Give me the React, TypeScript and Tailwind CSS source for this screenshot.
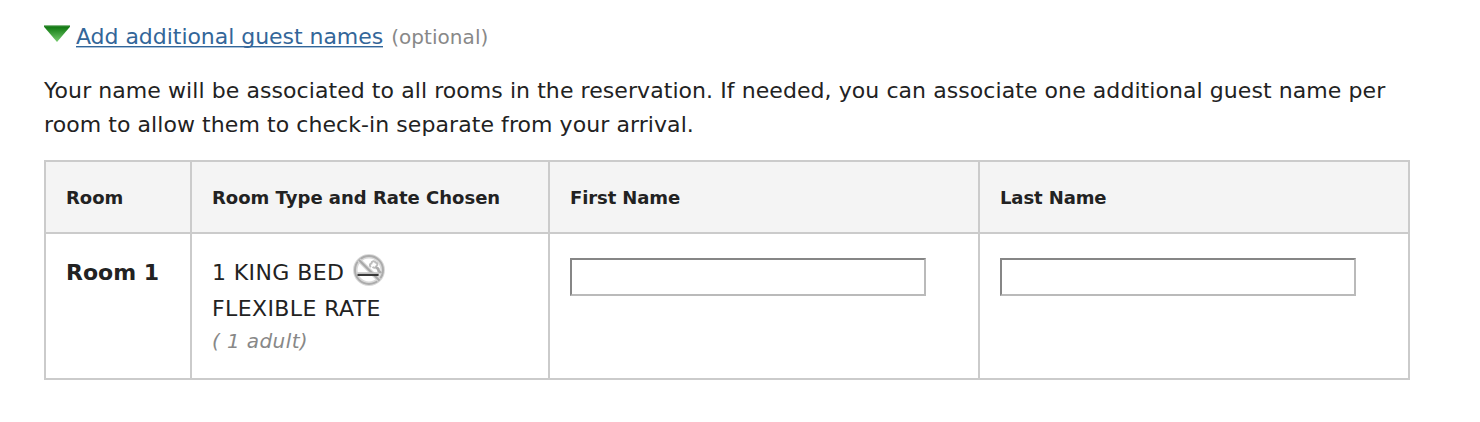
function NoSmokingIcon() {
  return (
    <svg width="32" height="32" viewBox="0 0 32 32" fill="none" className="shrink-0" aria-hidden="true">
      <circle cx="16" cy="16" r="13.7" stroke="#dadada" strokeWidth="4.6" />
      <circle cx="16" cy="16" r="14" stroke="#acacac" strokeWidth="2" />
      <path d="M6 6 26.5 26.5" stroke="#d6d6d6" strokeWidth="4.4" />
      <path d="M6 6 26.5 26.5" stroke="#a8a8a8" strokeWidth="2" />
      <path d="M18 13c-1.800-1.200-1.400-3.200.4-3.600.2-2.400 3.300-3 4.200-.9 2 .1 2.400 2.600.8 3.500-.2 1.800-2.800 2.400-3.800.8" stroke="#bdbdbd" strokeWidth="2" />
      <path d="M22.500 14c1.800-.4 3 .6 3 2.200s1.600 1.200 2 3" stroke="#acacac" strokeWidth="2.800" />
      <path d="M4.500 20H26" stroke="#c2c2c2" strokeWidth="3.500" />
      <path d="M4.500 21H25.500" stroke="#383838" strokeWidth="2" />
    </svg>
  );
}

function GuestInput({ label }: { label: string }) {
  return (
    <input
      type="text"
      aria-label={label}
      className="block h-[38px] w-[356px] rounded-none border-2 border-t-[#868686] border-r-[#bababa] border-b-[#bababa] border-l-[#868686] bg-white px-1 outline-none"
    />
  );
}

const headCell = "flex items-center border-r-2 border-b-2 border-[#cbcbcb] bg-[#f4f4f4] pl-5 text-[18px] font-bold";
const bodyCell = "border-r-2 border-b-2 border-[#cbcbcb] pl-5";

export default function App() {
  return (
    <main className="h-[422px] w-[1480px] bg-white pt-[19px] pl-11 font-['Verdana','DejaVu_Sans',sans-serif] text-[22px] text-[#222]">
      <div className="flex h-[34px] items-start">
        <svg width="26" height="17" viewBox="0 0 26 17" className="mt-1.5 mr-1.5" aria-hidden="true">
          <defs>
            <linearGradient id="arrow" x1="0" y1="0" x2="0" y2="1">
              <stop offset="0" stopColor="#5fa65f" />
              <stop offset="0.1" stopColor="#147914" />
              <stop offset="0.2" stopColor="#1b821b" />
              <stop offset="1" stopColor="#78cc70" />
            </linearGradient>
          </defs>
          <path d="M0 0.300H26V1.800L13 17 0 1.800Z" fill="url(#arrow)" />
        </svg>
        <a href="#" className="h-7 border-b border-[#336699] leading-[36px] tracking-[-0.04px] text-[#336699] shadow-[0_1px_0_#a9c1d9]">
          Add additional guest names
        </a>
        <span className="ml-2 pt-px text-[20px] leading-[34px] tracking-[0.05px] text-[#888]">(optional)</span>
      </div>
      <p className="mt-[21px] leading-[34px] tracking-[0.07px] whitespace-nowrap">
        Your name will be associated to all rooms in the reservation. If needed, you can associate one additional guest name per
        <br />
        room to allow them to check-in separate from your arrival.
      </p>
      <div className="mt-[18px] grid w-[1366px] grid-cols-[146px_358px_430px_430px] grid-rows-[72px_146px] border-t-2 border-l-2 border-[#cbcbcb]">
        <div className={headCell}>Room</div>
        <div className={headCell}>Room Type and Rate Chosen</div>
        <div className={headCell + " tracking-[-0.1px]"}>First Name</div>
        <div className={headCell + " tracking-[-0.1px]"}>Last Name</div>
        <div className={bodyCell + " pt-[22px] leading-[34px] font-bold"}>Room 1</div>
        <div className={bodyCell + " pt-5 tracking-[0.4px]"}>
          <div className="flex h-9 items-start gap-[9px] leading-[38px]">
            1 KING BED
            <NoSmokingIcon />
          </div>
          <div className="h-9 leading-[38px]">FLEXIBLE RATE</div>
          <div className="text-[20px] leading-[30px] text-[#888] italic">( 1 adult)</div>
        </div>
        <div className={bodyCell + " pt-6"}>
          <GuestInput label="First Name" />
        </div>
        <div className={bodyCell + " pt-6"}>
          <GuestInput label="Last Name" />
        </div>
      </div>
    </main>
  );
}
